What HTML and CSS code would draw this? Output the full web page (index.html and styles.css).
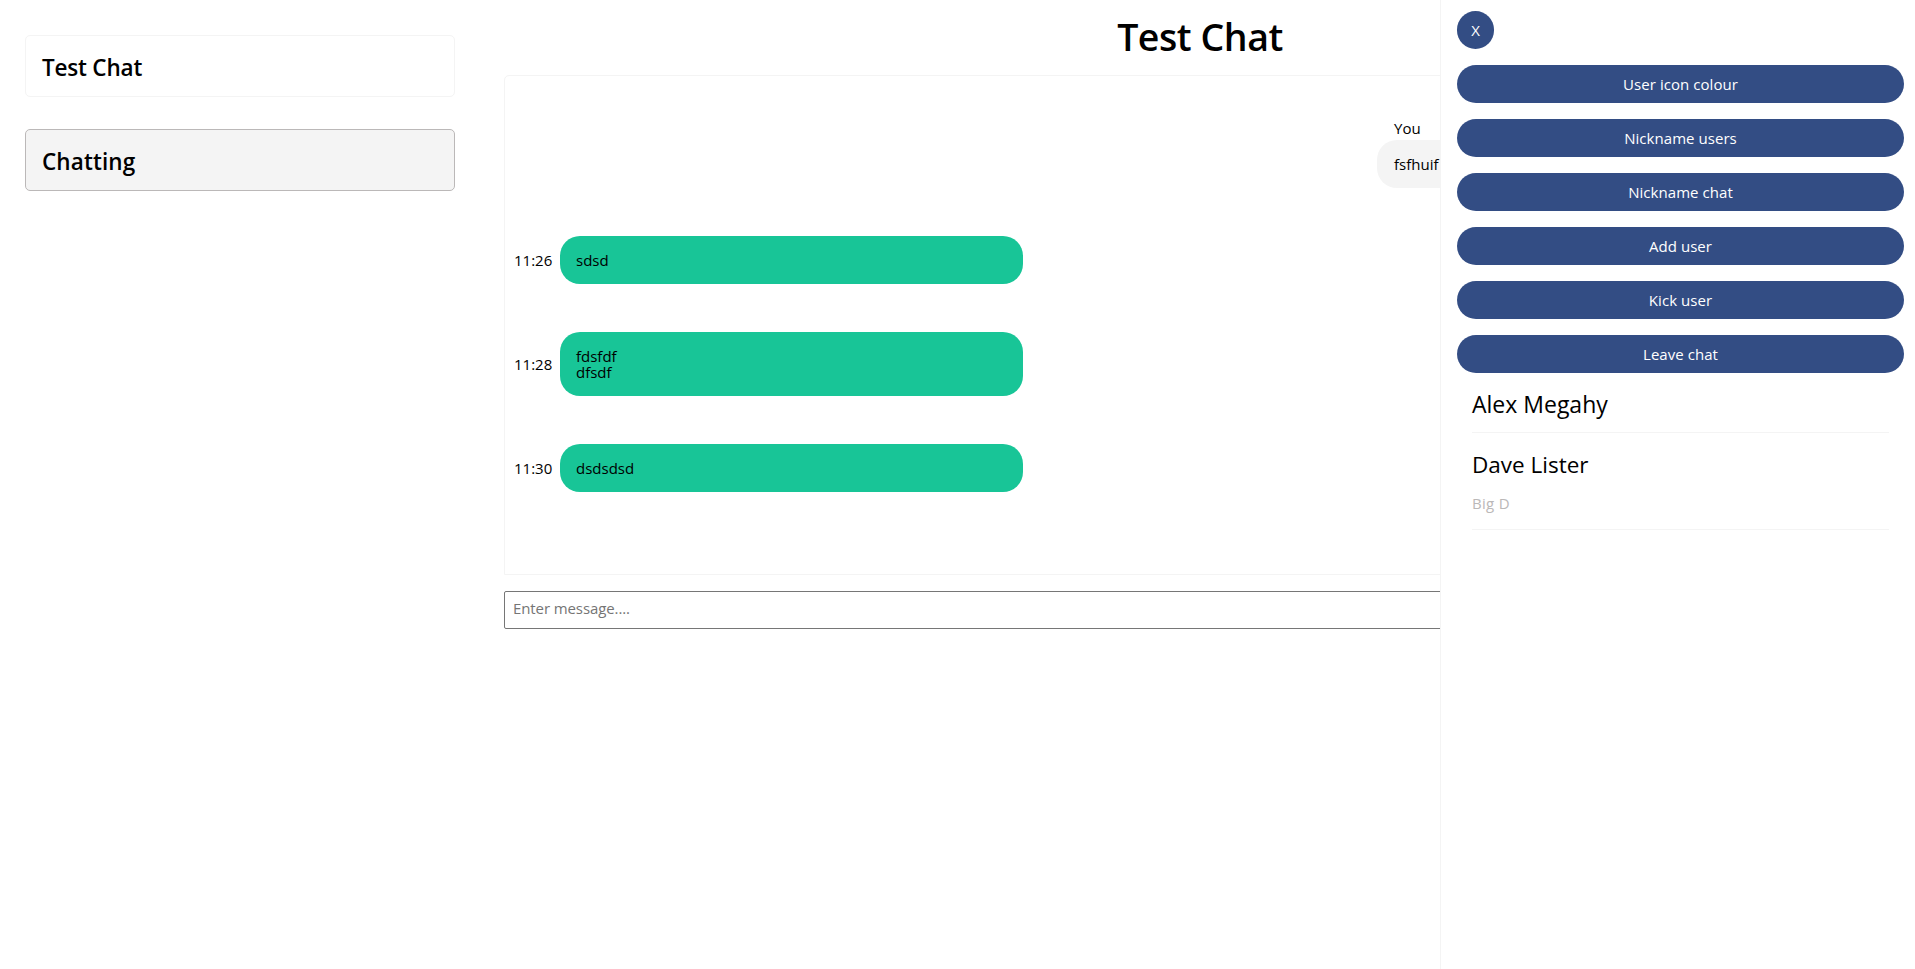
FILE: index.html
```html
<!DOCTYPE html>
<html lang="en">
<head>
<meta charset="utf-8">
<title>Test Chat</title>
<link rel="stylesheet" href="styles.css">
</head>
<body>
<div class="app">
  <nav class="chats">
    <h2 class="chat-card">Test Chat</h2>
    <h2 class="chat-card chat-card--active">Chatting</h2>
  </nav>
  <main class="conversation">
    <h1 class="title">Test Chat</h1>
    <section class="messages">
      <div class="own">
        <div class="author">You</div>
        <div class="bubble bubble--own">fsfhuif</div>
      </div>
      <div class="message"><time class="time">11:26</time><div class="bubble">sdsd</div></div>
      <div class="message"><time class="time">11:28</time><div class="bubble">fdsfdf<br>dfsdf</div></div>
      <div class="message"><time class="time">11:30</time><div class="bubble">dsdsdsd</div></div>
    </section>
    <input class="composer" type="text" placeholder="Enter message....">
  </main>
</div>
<aside class="drawer">
  <button class="button button--close">X</button>
  <button class="button">User icon colour</button>
  <button class="button">Nickname users</button>
  <button class="button">Nickname chat</button>
  <button class="button">Add user</button>
  <button class="button">Kick user</button>
  <button class="button">Leave chat</button>
  <div class="users">
    <div class="user"><div class="user-name user-name--first">Alex Megahy</div></div>
    <div class="user"><div class="user-name user-name--second">Dave Lister</div><div class="nickname">Big D</div></div>
  </div>
</aside>
</body>
</html>
```
FILE: styles.css
```css
* { box-sizing: border-box; }
body {
  margin: 0;
  height: 100vh;
  overflow: hidden;
  background: #fff;
  color: #000;
  font: 15px/16px "Open Sans", "Noto Sans", sans-serif;
}
.app { display: flex; }
.chats {
  width: 480px;
  padding: 35px 25px;
  display: flex;
  flex-direction: column;
  gap: 32px;
}
.chat-card {
  margin: 0;
  height: 62px;
  padding: 18px 16px 14px;
  border: 1px solid #f4f4f4;
  border-radius: 5px;
  font-size: 22.5px;
  line-height: 28px;
  font-weight: 600;
  letter-spacing: -0.2px;
}
.chat-card--active {
  background: #f4f4f4;
  border-color: #bbb8b8;
  letter-spacing: 0.1px;
}
.conversation {
  flex: 1;
  padding: 0 19px 0 24px;
  display: flex;
  flex-direction: column;
}
.title {
  margin: 0;
  height: 75px;
  line-height: 73px;
  text-align: center;
  font-size: 37.5px;
  font-weight: 600;
  letter-spacing: -0.45px;
}
.messages {
  height: 500px;
  padding: 44px 9px 0;
  border: 1px solid #f4f4f4;
  border-radius: 5px 5px 0 0;
  display: flex;
  flex-direction: column;
  gap: 48px;
}
.own { align-self: flex-end; width: 509px; }
.author { height: 20px; padding: 0 17px 4px; }
.message { display: flex; align-items: center; }
.time { width: 46px; flex: none; }
.bubble {
  width: 463px;
  padding: 16px;
  border-radius: 20px;
  background: #18c597;
}
.bubble--own { background: #f4f4f4; padding-left: 17px; }
.composer {
  height: 38px;
  margin-top: 16px;
  padding: 0 8px 4px;
  border: 1px solid #767676;
  border-radius: 2px;
  font: inherit;
  letter-spacing: -0.1px;
}
.composer::placeholder { color: #757575; }
.drawer {
  position: fixed;
  top: 0;
  right: 0;
  bottom: 0;
  width: 475px;
  padding: 11px 11px 0 16px;
  border-left: 1px solid #f4f4f4;
  background: #fff;
  display: flex;
  flex-direction: column;
  gap: 16px;
}
.button {
  height: 38px;
  padding: 0 0 1px;
  border: 0;
  border-radius: 20px;
  background: #334d84;
  color: #fff;
  font: inherit;
  letter-spacing: 0.05px;
}
.button--close { width: 37px; }
.users { padding: 0 15px; }
.user { padding-bottom: 14px; border-bottom: 1px solid #f4f4f4; }
.user-name { font-size: 23px; line-height: 28px; }
.user-name--first { padding-top: 1px; }
.user-name--second { padding-top: 18px; font-size: 22.5px; }
.nickname { margin-top: 16px; padding-bottom: 4px; color: #bbb8b8; letter-spacing: 0.3px; }
```
